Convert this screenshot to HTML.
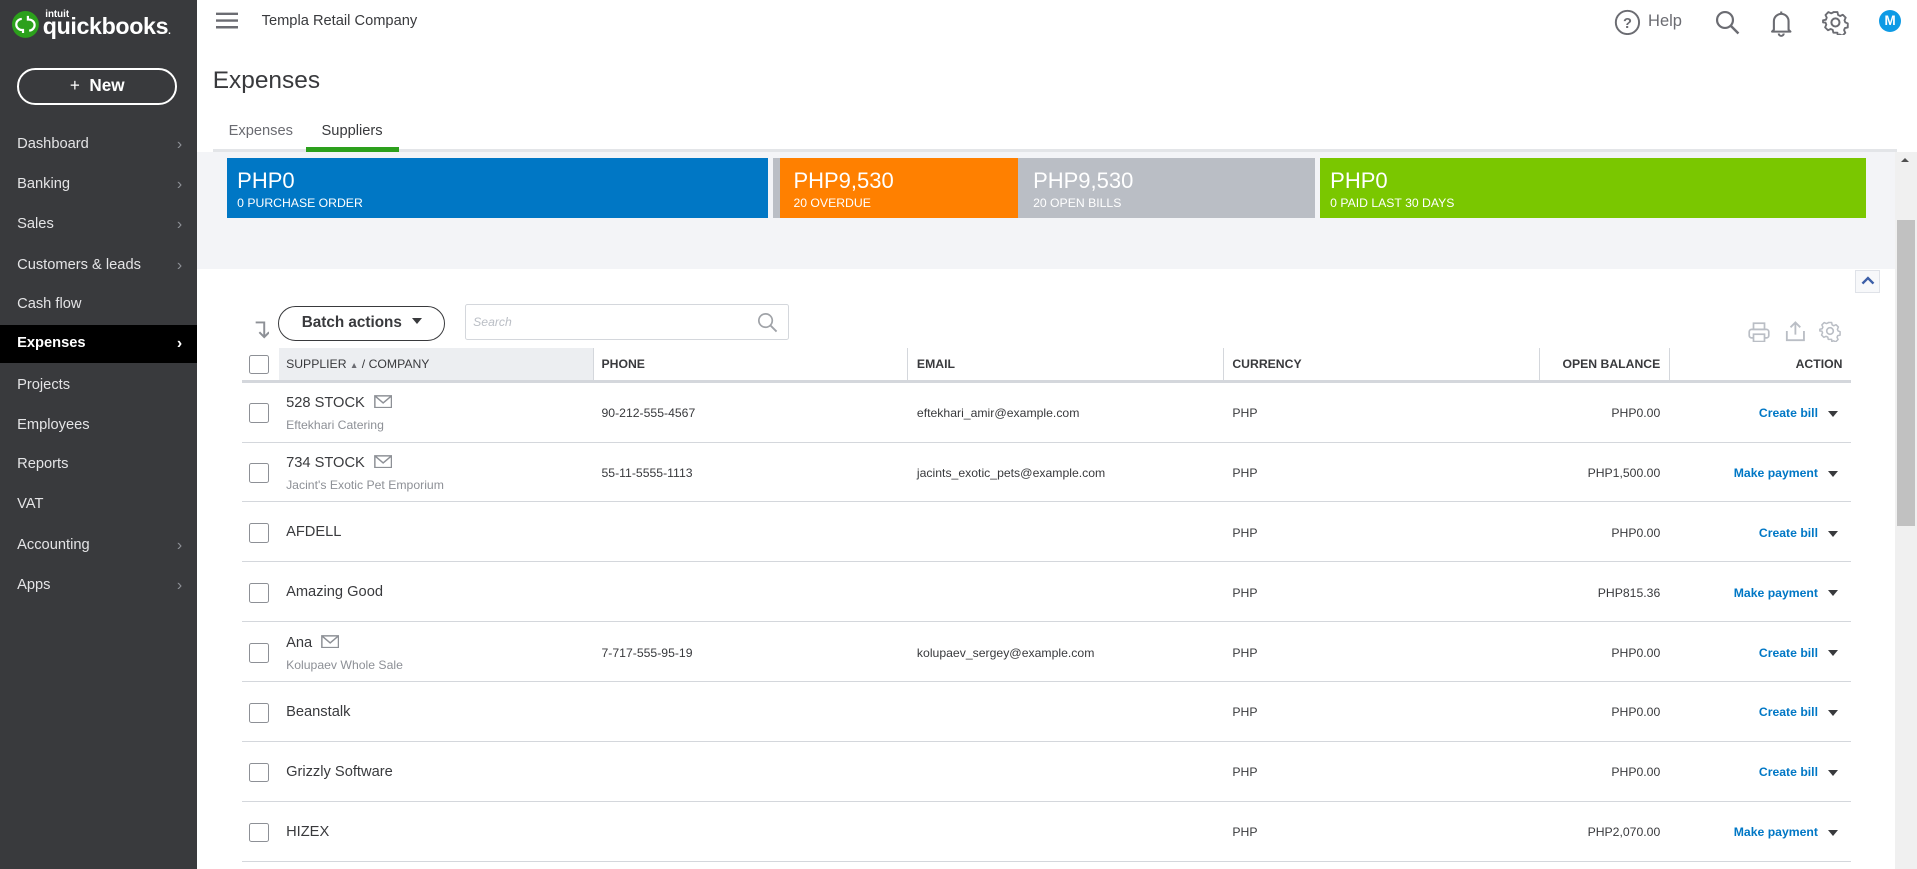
<!DOCTYPE html>
<html><head><meta charset="utf-8">
<style>
html{zoom:1.22258}
*{box-sizing:border-box;margin:0;padding:0}
body{width:1568px;height:711px;overflow:hidden;font-family:"Liberation Sans",sans-serif;background:#fff;position:relative;color:#393a3d}
.a{position:absolute}
#side{left:0;top:0;width:161px;height:711px;background:#393a3d}
.mi{position:absolute;left:0;width:161px;height:32px;line-height:32px;padding-left:14px;font-size:12px;color:#e4e4e6}
.mi .ch{position:absolute;right:12px;top:0;color:#8d9096;font-size:13px}
.cb{position:absolute;width:16px;height:16px;border:1px solid #8d9096;border-radius:2px;background:#fff}
.row{position:absolute;left:198px;width:1316px;height:49px;border-bottom:1px solid #d4d7dc}
.nm{position:absolute;left:36px;font-size:12px;color:#393a3d}
.sub{position:absolute;left:36px;font-size:10px;color:#8d9096}
.c{position:absolute;font-size:10px;color:#393a3d;top:19px}
.bal{position:absolute;right:156px;top:19px;font-size:10px;color:#393a3d}
.act{position:absolute;right:27px;top:19px;font-size:10px;font-weight:bold;color:#0077c5}
.dd{position:absolute;right:11px;top:23px;width:0;height:0;border-left:4.5px solid transparent;border-right:4.5px solid transparent;border-top:5px solid #393a3d}
.hd{position:absolute;top:292px;font-size:10px;font-weight:bold;color:#393a3d}
.vs{position:absolute;top:285px;width:1px;height:27px;background:#d4d7dc}
.card{position:absolute;top:129px;height:49px;color:#fff;padding-left:8px}
.card b{display:block;font-weight:normal;font-size:18px;margin-top:9px;line-height:20px}
.card i{display:block;font-style:normal;font-size:10px;margin-top:2px}
</style></head><body>
<div id="side" class="a">
  <svg class="a" style="left:10px;top:9px" width="22" height="22" viewBox="0 0 22 22"><circle cx="11" cy="11" r="11" fill="#2ca01c"/><path d="M8 6.5a4.5 4.5 0 0 0 0 9h1V18M14 16a4.5 4.5 0 0 0 0-9h-1V4" stroke="#fff" stroke-width="1.8" fill="none"/></svg>
  <div class="a" style="left:37px;top:7px;font-size:8px;color:#fff;font-weight:bold">intuit</div>
  <div class="a" style="left:35px;top:11px;font-size:19px;color:#fff;font-weight:bold;letter-spacing:-0.3px">quickbooks<span style="font-size:8px">.</span></div>
  <div class="a" style="left:14px;top:56px;width:131px;height:30px;border:2px solid #fff;border-radius:15px;color:#fff;text-align:center;line-height:26px;font-size:14px;font-weight:bold"><span style="font-weight:normal">+</span>&nbsp; New</div>
  <div class="mi" style="top:102px">Dashboard<span class="ch">›</span></div>
  <div class="mi" style="top:135px">Banking<span class="ch">›</span></div>
  <div class="mi" style="top:168px">Sales<span class="ch">›</span></div>
  <div class="mi" style="top:201px">Customers &amp; leads<span class="ch">›</span></div>
  <div class="mi" style="top:233px">Cash flow</div>
  <div class="mi" style="top:266px;height:31px;line-height:31px;background:#000;color:#fff;font-weight:bold">Expenses<span class="ch" style="color:#fff">›</span></div>
  <div class="mi" style="top:299px">Projects</div>
  <div class="mi" style="top:332px">Employees</div>
  <div class="mi" style="top:364px">Reports</div>
  <div class="mi" style="top:397px">VAT</div>
  <div class="mi" style="top:430px">Accounting<span class="ch">›</span></div>
  <div class="mi" style="top:463px">Apps<span class="ch">›</span></div>
</div>
<svg class="a" style="left:177px;top:10px" width="18" height="14"><path d="M0 1.5h18M0 7h18M0 12.5h18" stroke="#6b6c72" stroke-width="2"/></svg>
<div class="a" style="left:214px;top:11px;font-size:12px;color:#393a3d">Templa Retail Company</div>
<svg class="a" style="left:1320px;top:7px" width="22" height="22"><circle cx="11" cy="11" r="9.5" stroke="#6b6c72" stroke-width="1.6" fill="none"/><text x="11" y="15.5" font-size="12" font-weight="bold" text-anchor="middle" fill="#6b6c72" font-family="Liberation Sans">?</text></svg>
<div class="a" style="left:1348px;top:10px;font-size:13.5px;color:#6b6c72">Help</div>
<svg class="a" style="left:1402px;top:7px" width="22" height="22"><circle cx="9" cy="9" r="6.5" stroke="#6b6c72" stroke-width="1.8" fill="none"/><path d="M14 14l6 6" stroke="#6b6c72" stroke-width="2"/></svg>
<svg class="a" style="left:1447px;top:7px" width="20" height="24"><path d="M4 17V10a6 6 0 0 1 12 0v7l1.5 1.5h-15z" stroke="#6b6c72" stroke-width="1.7" fill="none" stroke-linejoin="round"/><path d="M10 2v2M8 20a2 2 0 0 0 4 0" stroke="#6b6c72" stroke-width="1.7" fill="none"/></svg>
<svg class="a" style="left:1490px;top:7px" width="22" height="22" viewBox="0 0 24 24"><path d="M10 2h4l.6 2.8 2 1 2.6-1.2 2.8 2.8-1.2 2.6.8 2 2.4.9v4l-2.8.6-.8 2 1.2 2.6-2.8 2.8-2.6-1.2-2 .8L14 22h-4l-.6-2.8-2-.8-2.6 1.2L2 16.8l1.2-2.6-.8-2L0 12v-2l2.8-.6.8-2L2.4 4.8 5.2 2l2.6 1.2 2-.8z" transform="scale(.92) translate(1 1)" stroke="#6b6c72" stroke-width="1.8" fill="none" stroke-linejoin="round"/><circle cx="12" cy="12" r="3.6" stroke="#6b6c72" stroke-width="1.8" fill="none"/></svg>
<div class="a" style="left:1537px;top:8px;width:18px;height:18px;border-radius:50%;background:#0d9ae5;color:#fff;font-size:11px;font-weight:bold;text-align:center;line-height:18px">M</div>
<div class="a" style="left:174px;top:55px;font-size:20px;color:#393a3d">Expenses</div>
<div class="a" style="left:187px;top:101px;font-size:12px;color:#6b6c72">Expenses</div>
<div class="a" style="left:263px;top:101px;font-size:12px;color:#393a3d">Suppliers</div>
<div class="a" style="left:174px;top:122px;width:1378px;height:2px;background:#e3e5e8"></div>
<div class="a" style="left:250px;top:120px;width:76px;height:4px;background:#2ca01c"></div>
<div class="a" style="left:161px;top:124px;width:1389px;height:96px;background:#f3f4f7"></div>
<div class="card" style="left:186px;width:442px;background:#0077c5"><b>PHP0</b><i>0 PURCHASE ORDER</i></div>
<div class="card" style="left:632px;width:6px;background:#babec5;padding:0"></div>
<div class="card" style="left:638px;width:195px;background:#ff8000;padding-left:11px"><b>PHP9,530</b><i>20 OVERDUE</i></div>
<div class="card" style="left:833px;width:243px;background:#babec5;padding-left:12px"><b>PHP9,530</b><i>20 OPEN BILLS</i></div>
<div class="card" style="left:1080px;width:446px;background:#7ac700"><b>PHP0</b><i>0 PAID LAST 30 DAYS</i></div>
<div class="a" style="left:1550px;top:124px;width:18px;height:587px;background:#f0f0f0"></div>
<div class="a" style="left:1552px;top:180px;width:14px;height:250px;background:#c1c1c1"></div>
<div class="a" style="left:1555px;top:129px;width:0;height:0;border-left:4px solid transparent;border-right:4px solid transparent;border-bottom:4px solid #505050"></div>
<div class="a" style="left:1517px;top:221px;width:21px;height:19px;border:1px solid #dfe2e8;background:#f7f8fa"></div>
<svg class="a" style="left:1521px;top:225px" width="13" height="10"><path d="M2 7l4.5-4.5L11 7" stroke="#3c5fa8" stroke-width="2" fill="none"/></svg>
<svg class="a" style="left:206px;top:262px" width="14" height="16"><path d="M3 2h7v12M6 10l4 4 4-4" stroke="#8d9096" stroke-width="1.6" fill="none"/></svg>
<div class="a" style="left:227px;top:250px;width:137px;height:29px;border:1.6px solid #393a3d;border-radius:15px;font-size:12.5px;font-weight:bold;line-height:26px;padding-left:19px;color:#393a3d">Batch actions<span style="display:inline-block;margin-left:8px;width:0;height:0;border-left:4.5px solid transparent;border-right:4.5px solid transparent;border-top:5px solid #393a3d;vertical-align:2px"></span></div>
<div class="a" style="left:380px;top:249px;width:265px;height:29px;border:1px solid #d4d7dc;border-radius:2px"></div>
<div class="a" style="left:387px;top:258px;font-size:10px;font-style:italic;color:#babec5">Search</div>
<svg class="a" style="left:619px;top:255px" width="18" height="18"><circle cx="7" cy="7" r="5.5" stroke="#a0a3a8" stroke-width="1.4" fill="none"/><path d="M11 11l5 5" stroke="#a0a3a8" stroke-width="1.5"/></svg>
<svg class="a" style="left:1430px;top:263px" width="18" height="17"><rect x="1" y="6" width="16" height="7" rx="2" stroke="#babec5" stroke-width="1.4" fill="none"/><rect x="4.5" y="1" width="9" height="5" stroke="#babec5" stroke-width="1.4" fill="none"/><rect x="4.5" y="10" width="9" height="6" stroke="#babec5" stroke-width="1.4" fill="#fff"/></svg>
<svg class="a" style="left:1460px;top:262px" width="17" height="18"><path d="M8.5 12V2M4.5 6l4-4 4 4M1.5 9v7.5h14V9" stroke="#babec5" stroke-width="1.5" fill="none"/></svg>
<svg class="a" style="left:1488px;top:262px" width="18" height="18" viewBox="0 0 24 24"><path d="M10 2h4l.6 2.8 2 1 2.6-1.2 2.8 2.8-1.2 2.6.8 2 2.4.9v4l-2.8.6-.8 2 1.2 2.6-2.8 2.8-2.6-1.2-2 .8L14 22h-4l-.6-2.8-2-.8-2.6 1.2L2 16.8l1.2-2.6-.8-2L0 12v-2l2.8-.6.8-2L2.4 4.8 5.2 2l2.6 1.2 2-.8z" transform="scale(.92) translate(1 1)" stroke="#babec5" stroke-width="1.8" fill="none" stroke-linejoin="round"/><circle cx="12" cy="12" r="3.6" stroke="#babec5" stroke-width="1.8" fill="none"/></svg>
<div class="a" style="left:228px;top:285px;width:257px;height:27px;background:#eceef1"></div>
<div class="cb" style="left:204px;top:290px"></div>
<div class="hd" style="left:234px;font-weight:normal">SUPPLIER <span style="font-size:7px;color:#6b6c72">▲</span> / COMPANY</div>
<div class="hd" style="left:492px">PHONE</div>
<div class="hd" style="left:750px">EMAIL</div>
<div class="hd" style="left:1008px">CURRENCY</div>
<div class="hd" style="left:1259px;width:99px;text-align:right">OPEN BALANCE</div>
<div class="hd" style="left:1400px;width:107px;text-align:right">ACTION</div>
<div class="vs" style="left:485px"></div><div class="vs" style="left:742px"></div><div class="vs" style="left:1000px"></div><div class="vs" style="left:1259px"></div><div class="vs" style="left:1365px"></div>
<div class="a" style="left:198px;top:311px;width:1316px;height:2px;background:#d4d7dc"></div>
<div class="row" style="top:313px"><div class="cb" style="left:6px;top:17px"></div><div class="nm" style="top:10px">528 STOCK <svg width="15" height="11" style="margin-left:4px;vertical-align:-1px"><rect x=".7" y=".7" width="13.6" height="9.6" stroke="#8d9096" stroke-width="1.2" fill="none"/><path d="M1 1l6.5 5.5L14 1" stroke="#8d9096" stroke-width="1.2" fill="none"/></svg></div><div class="sub" style="top:29px">Eftekhari Catering</div><div class="c" style="left:294px">90-212-555-4567</div><div class="c" style="left:552px">eftekhari_amir@example.com</div><div class="c" style="left:810px">PHP</div><div class="bal">PHP0.00</div><div class="act">Create bill</div><div class="dd"></div></div>
<div class="row" style="top:362px"><div class="cb" style="left:6px;top:17px"></div><div class="nm" style="top:10px">734 STOCK <svg width="15" height="11" style="margin-left:4px;vertical-align:-1px"><rect x=".7" y=".7" width="13.6" height="9.6" stroke="#8d9096" stroke-width="1.2" fill="none"/><path d="M1 1l6.5 5.5L14 1" stroke="#8d9096" stroke-width="1.2" fill="none"/></svg></div><div class="sub" style="top:29px">Jacint's Exotic Pet Emporium</div><div class="c" style="left:294px">55-11-5555-1113</div><div class="c" style="left:552px">jacints_exotic_pets@example.com</div><div class="c" style="left:810px">PHP</div><div class="bal">PHP1,500.00</div><div class="act">Make payment</div><div class="dd"></div></div>
<div class="row" style="top:411px"><div class="cb" style="left:6px;top:17px"></div><div class="nm" style="top:18px">AFDELL</div><div class="c" style="left:810px">PHP</div><div class="bal">PHP0.00</div><div class="act">Create bill</div><div class="dd"></div></div>
<div class="row" style="top:460px"><div class="cb" style="left:6px;top:17px"></div><div class="nm" style="top:18px">Amazing Good</div><div class="c" style="left:810px">PHP</div><div class="bal">PHP815.36</div><div class="act">Make payment</div><div class="dd"></div></div>
<div class="row" style="top:509px"><div class="cb" style="left:6px;top:17px"></div><div class="nm" style="top:10px">Ana <svg width="15" height="11" style="margin-left:4px;vertical-align:-1px"><rect x=".7" y=".7" width="13.6" height="9.6" stroke="#8d9096" stroke-width="1.2" fill="none"/><path d="M1 1l6.5 5.5L14 1" stroke="#8d9096" stroke-width="1.2" fill="none"/></svg></div><div class="sub" style="top:29px">Kolupaev Whole Sale</div><div class="c" style="left:294px">7-717-555-95-19</div><div class="c" style="left:552px">kolupaev_sergey@example.com</div><div class="c" style="left:810px">PHP</div><div class="bal">PHP0.00</div><div class="act">Create bill</div><div class="dd"></div></div>
<div class="row" style="top:558px"><div class="cb" style="left:6px;top:17px"></div><div class="nm" style="top:18px">Beanstalk</div><div class="c" style="left:810px">PHP</div><div class="bal">PHP0.00</div><div class="act">Create bill</div><div class="dd"></div></div>
<div class="row" style="top:607px"><div class="cb" style="left:6px;top:17px"></div><div class="nm" style="top:18px">Grizzly Software</div><div class="c" style="left:810px">PHP</div><div class="bal">PHP0.00</div><div class="act">Create bill</div><div class="dd"></div></div>
<div class="row" style="top:656px"><div class="cb" style="left:6px;top:17px"></div><div class="nm" style="top:18px">HIZEX</div><div class="c" style="left:810px">PHP</div><div class="bal">PHP2,070.00</div><div class="act">Make payment</div><div class="dd"></div></div>
</body></html>
